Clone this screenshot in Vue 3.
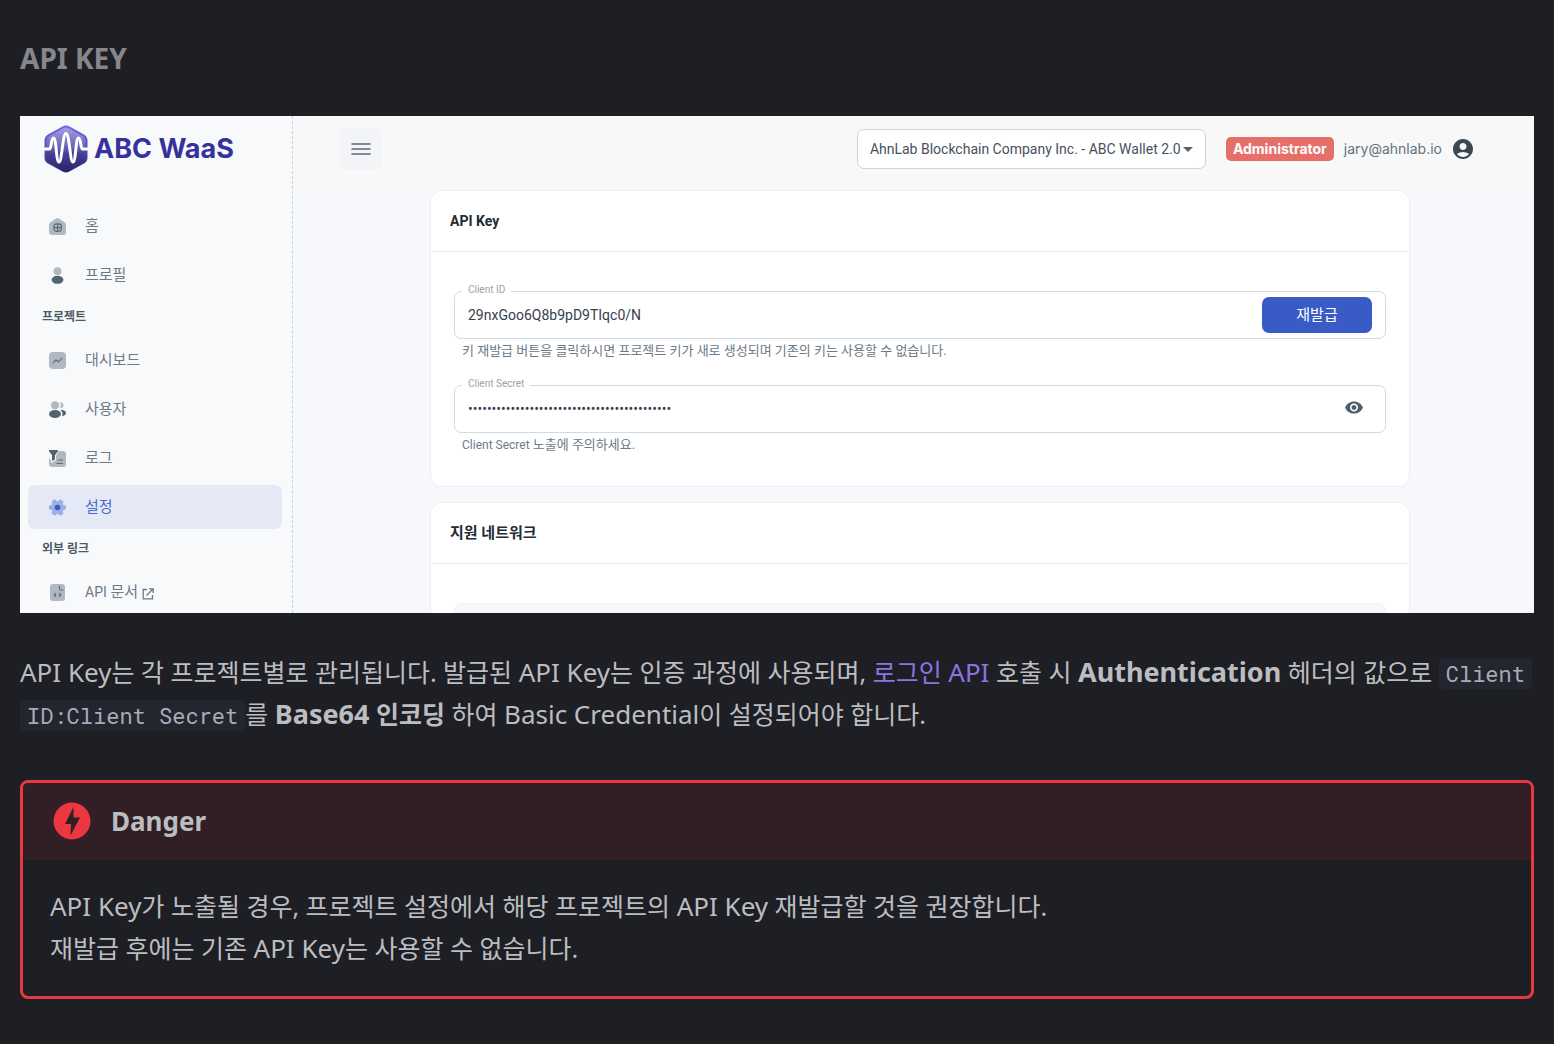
<script setup>
import { ref } from 'vue'

const topItems = [
  { icon: 'home', label: '홈' },
  { icon: 'profile', label: '프로필' },
]
const projectItems = [
  { icon: 'dashboard', label: '대시보드' },
  { icon: 'users', label: '사용자' },
  { icon: 'log', label: '로그' },
  { icon: 'settings', label: '설정', active: true },
]
const externalItems = [{ icon: 'docs', latin: 'API', label: ' 문서', external: true }]

const groups = [
  { title: '', items: topItems },
  { title: '프로젝트', items: projectItems },
  { title: '외부 링크', items: externalItems },
]

const clientId = ref('29nxGoo6Q8b9pD9TIqc0/N')
const clientSecret = ref('x'.repeat(43))
</script>

<template>
  <article class="doc">
    <h3 class="doc-title">API KEY</h3>

    <div class="console">
      <aside class="sidebar">
        <a class="brand" href="#">
          <svg class="brand-mark" viewBox="0 0 44 48" aria-hidden="true">
            <defs>
              <linearGradient id="mark" x1="0" y1="0" x2="0" y2="1">
                <stop offset="0" stop-color="#a9a0e0" />
                <stop offset="0.45" stop-color="#6d64b8" />
                <stop offset="0.6" stop-color="#46409b" />
                <stop offset="1" stop-color="#272466" />
              </linearGradient>
              <linearGradient id="rim" x1="0" y1="0" x2="0" y2="1">
                <stop offset="0" stop-color="#6b66ee" />
                <stop offset="0.5" stop-color="#5650b4" />
                <stop offset="1" stop-color="#2b2870" />
              </linearGradient>
            </defs>
            <path d="M19 2.300a6 6 0 0 1 6 0l14.500 8a6 6 0 0 1 3 5.200v17a6 6 0 0 1-3 5.200l-14.500 8a6 6 0 0 1-6 0l-14.500-8a6 6 0 0 1-3-5.200v-17a6 6 0 0 1 3-5.200z" fill="url(#mark)" stroke="url(#rim)" stroke-width="2" />
            <path d="M1 24h4.500c2 0 1.500-11 4-11 3 0 2.500 24 5.500 24S18.500 8.500 22 8.500 26 37 29 37s2.500-24 5.500-24c2.500 0 2 11 4 11H43" fill="none" stroke="#fff" stroke-width="3" stroke-linecap="round" stroke-linejoin="round" />
          </svg>
          <span>ABC WaaS</span>
        </a>

        <nav class="menu">
          <template v-for="group in groups" :key="group.title">
            <h4 v-if="group.title" class="menu-title">{{ group.title }}</h4>
            <a
              v-for="item in group.items"
              :key="item.label"
              href="#"
              class="menu-item"
              :class="{ active: item.active }"
            >
              <svg class="menu-icon" viewBox="0 0 17 17" aria-hidden="true">
                <g v-if="item.icon === 'home'">
                  <path class="soft" d="M7 .6a2.500 2.500 0 0 1 3 0l5.500 3.600A2.800 2.800 0 0 1 17 6.600V14a3 3 0 0 1-3 3H3a3 3 0 0 1-3-3V6.600a2.800 2.800 0 0 1 1.500-2.400z" />
                  <rect x="4.800" y="5.800" width="7.600" height="7.600" rx="2.800" fill="none" stroke="#5a6b78" stroke-width="1.200" />
                  <path d="M8.600 5.800v7.600M4.800 9.600h7.600" stroke="#5a6b78" stroke-width="1.200" />
                </g>
                <g v-else-if="item.icon === 'profile'">
                  <circle class="soft" cx="8.500" cy="4.200" r="3.900" />
                  <ellipse class="strong" cx="8.500" cy="12.800" rx="5.900" ry="4" />
                </g>
                <g v-else-if="item.icon === 'dashboard'">
                  <rect class="soft" width="17" height="17" rx="4" />
                  <path d="M4.200 10.800l2.700-2.900 2.600 1.900 3.500-3.600" fill="none" stroke="#5a6b78" stroke-width="1.200" stroke-linecap="round" stroke-linejoin="round" />
                </g>
                <g v-else-if="item.icon === 'users'">
                  <circle class="soft" cx="6" cy="4.200" r="4" />
                  <path class="soft" d="M11 1.300a3 3 0 1 1 0 5.900c1-1.900 1-4 0-5.900z" />
                  <ellipse class="strong" cx="6" cy="13" rx="6" ry="4" />
                  <path class="strong" d="M11.500 8.800c3.200 0 5.500 1.400 5.500 3.300 0 1.600-1.400 2.900-4 3.200 1.200-2.600.3-4.700-1.500-6.500z" />
                </g>
                <g v-else-if="item.icon === 'log'">
                  <path class="soft" d="M9.500 1H14a3 3 0 0 1 3 3v10a3 3 0 0 1-3 3H3a3 3 0 0 1-3-3V8.500l2 1.500v3l5-2.800V6z" />
                  <path class="strong" d="M.5 0h7.800c.7 0 .9.700.6 1.200L6 5.200v4.300L3 11V5.200L0 1.200C-.3.700 0 0 .5 0z" />
                  <path d="M9 10h5M7.500 13.500H14" stroke="#5a6b78" stroke-width="1.200" />
                </g>
                <g v-else-if="item.icon === 'settings'">
                  <g fill="#9dafe3">
                    <circle cx="8.500" cy="8.500" r="6.300" />
                    <rect x="6" y="0" width="5" height="17" rx="1.800" transform="rotate(30 8.500 8.500)" />
                    <rect x="6" y="0" width="5" height="17" rx="1.800" transform="rotate(90 8.500 8.500)" />
                    <rect x="6" y="0" width="5" height="17" rx="1.800" transform="rotate(150 8.500 8.500)" />
                  </g>
                  <circle cx="8.500" cy="8.500" r="2.800" fill="#3a5bc7" />
                </g>
                <g v-else>
                  <rect class="soft" x="1" width="15" height="17" rx="3" />
                  <path d="M10.500 2v2.500a1.500 1.500 0 0 0 1.500 1.500h2.500M7 9.300L5.200 11 7 12.700M10 9.300l1.800 1.700-1.800 1.700" fill="none" stroke="#5a6b78" stroke-width="1.200" />
                </g>
              </svg>
              <span><span v-if="item.latin" class="latin">{{ item.latin }}</span>{{ item.label }}</span>
              <svg v-if="item.external" class="external" viewBox="0 0 12 12" aria-hidden="true">
                <path d="M5 1.500H1.200v9.300h9.300V7M7 .800h4.200V5M11 1L4.500 7.500" fill="none" stroke="currentColor" stroke-width="1.300" />
              </svg>
            </a>
          </template>
        </nav>
      </aside>

      <main class="content">
        <header class="topbar">
          <button class="burger" type="button" aria-label="메뉴">
            <svg viewBox="0 0 20 14" width="20" height="14" aria-hidden="true">
              <path d="M1 2h18M1 7h18M1 12h18" stroke="#5a6875" stroke-width="1.500" stroke-linecap="round" />
            </svg>
          </button>
          <div class="project">
            <select aria-label="프로젝트 선택">
              <option>AhnLab Blockchain Company Inc. - ABC Wallet 2.0</option>
            </select>
            <svg class="caret" viewBox="0 0 10 5" width="10" height="5" aria-hidden="true">
              <path d="M0 0h10L5 5z" fill="#53636f" />
            </svg>
          </div>
          <span class="role">Administrator</span>
          <span class="account">jary@ahnlab.io</span>
          <svg class="avatar" viewBox="2 2 20 20" aria-hidden="true">
            <path fill="#3c4653" d="M12 2C6.480 2 2 6.480 2 12s4.480 10 10 10 10-4.480 10-10S17.520 2 12 2zm0 4c1.930 0 3.500 1.570 3.500 3.500S13.930 13 12 13s-3.500-1.570-3.500-3.500S10.070 6 12 6zm0 14c-2.030 0-4.430-.820-6.140-2.880a9.950 9.950 0 0 1 12.280 0C16.430 19.180 14.030 20 12 20z" />
          </svg>
        </header>

        <div class="cards">
          <section class="card">
            <h2 class="card-title"><span class="latin">API Key</span></h2>
            <div class="card-body">
              <div class="field">
                <div class="field-box">
                  <label for="client-id">Client ID</label>
                  <input id="client-id" v-model="clientId" type="text" readonly />
                  <button class="reissue" type="button">재발급</button>
                </div>
                <p class="hint">키 재발급 버튼을 클릭하시면 프로젝트 키가 새로 생성되며 기존의 키는 사용할 수 없습니다.</p>
              </div>
              <div class="field">
                <div class="field-box">
                  <label for="client-secret">Client Secret</label>
                  <input id="client-secret" v-model="clientSecret" type="password" readonly />
                  <button class="reveal" type="button" aria-label="Client Secret 보기">
                    <svg viewBox="1 4 22 16" width="18" height="13" aria-hidden="true">
                      <path fill="#4e5f6b" d="M12 4.500C7 4.500 2.730 7.610 1 12c1.730 4.390 6 7.500 11 7.500s9.270-3.110 11-7.500c-1.730-4.390-6-7.500-11-7.500zM12 17c-2.760 0-5-2.240-5-5s2.240-5 5-5 5 2.240 5 5-2.240 5-5 5zm0-8c-1.660 0-3 1.340-3 3s1.340 3 3 3 3-1.340 3-3-1.340-3-3-3z" />
                    </svg>
                  </button>
                </div>
                <p class="hint"><span class="latin">Client Secret</span> 노출에 주의하세요.</p>
              </div>
            </div>
          </section>

          <section class="card">
            <h2 class="card-title">지원 네트워크</h2>
            <div class="card-body">
              <div class="network-list"></div>
            </div>
          </section>
        </div>
      </main>
    </div>

    <p class="prose">
      <span class="latin">API Key</span>는 각 프로젝트별로 관리됩니다. 발급된 <span class="latin">API Key</span>는 인증 과정에 사용되며,
      <a href="#">로그인 <span class="latin">API</span></a> 호출 시
      <strong><span class="latin">Authentication</span></strong> 헤더의 값으로 <code>Client ID:Client Secret</code>를
      <strong><span class="latin">Base64</span> 인코딩</strong> 하여 <span class="latin">Basic Credential</span>이 설정되어야 합니다.
    </p>

    <div class="danger">
      <p class="danger-title">
        <svg viewBox="0 0 38 38" width="38" height="38" aria-hidden="true">
          <circle cx="19" cy="19" r="18.500" fill="#eb3740" />
          <path d="M20.500 5L12 22h6l-.5 11.500L27 15.500h-6.500z" fill="#311f25" />
        </svg>
        <span class="latin">Danger</span>
      </p>
      <p class="danger-body">
        <span class="latin">API Key</span>가 노출될 경우, 프로젝트 설정에서 해당 프로젝트의 <span class="latin">API Key</span> 재발급할 것을 권장합니다.<br />
        재발급 후에는 기존 <span class="latin">API Key</span>는 사용할 수 없습니다.
      </p>
    </div>
  </article>
</template>

<style>
body {
  margin: 0;
  background: #1e1f24;
}
</style>

<style scoped>
* {
  box-sizing: border-box;
}

.doc {
  padding: 37px 20px 44px;
  color: #bcbdc1;
  font-family: "Noto Sans", "Noto Sans CJK KR", sans-serif;
  font-size: 25px;
  line-height: 42px;
}

/* Latin and Hangul glyphs are sized separately so they look even side by side */
.latin {
  font-size: 26px;
  line-height: 1;
}

.doc-title {
  margin: 0 0 37px;
  color: #86878c;
  font-size: 28px;
  font-weight: 700;
  line-height: 42px;
}

/* console preview */
.console {
  display: flex;
  height: 497px;
  overflow: hidden;
  background: #f7f8fb;
  color: #637381;
  font-family: Roboto, "Noto Sans CJK KR", sans-serif;
  font-size: 14px;
  line-height: 20px;
}

.sidebar {
  flex: 0 0 273px;
  border-right: 1px dashed #c9d3db;
  background: #f8f9fb;
}

.brand {
  display: flex;
  align-items: center;
  gap: 6px;
  height: 66px;
  padding-left: 24px;
  color: #37329b;
  font-family: Inter, sans-serif;
  font-size: 27px;
  font-weight: 700;
  text-decoration: none;
}

.brand-mark {
  width: 44px;
  height: 48px;
}

.menu {
  display: flex;
  flex-direction: column;
  gap: 5px;
  padding: 22px 10px 0 8px;
}

.menu-title {
  height: 31px;
  margin: 0;
  padding: 5px 0 0 14px;
  color: #4b5a67;
  font-size: 12px;
  font-weight: 700;
  line-height: 20px;
}

.menu-item {
  display: flex;
  flex: none;
  align-items: center;
  height: 44px;
  padding-left: 21px;
  border-radius: 7px;
  color: #6c7a87;
  font-size: 15px;
  text-decoration: none;
}

.menu-item .latin,
.card-title .latin {
  font-size: 14px;
}

.menu-item.active {
  background: #e5e9f5;
  color: #4a6ad0;
}

.menu-icon {
  width: 17px;
  height: 17px;
  margin-right: 19px;
}

.soft {
  fill: #b0b9c1;
}

.strong {
  fill: #53646f;
}

.external {
  width: 12px;
  height: 12px;
  margin: 3px 0 0 4px;
}

.content {
  flex: 1;
  min-width: 0;
}

.topbar {
  display: flex;
  align-items: center;
  height: 74px;
  padding: 0 61px 8px 47px;
  background: #f8f8f8;
}

.burger {
  display: grid;
  place-items: center;
  width: 42px;
  height: 42px;
  margin-right: auto;
  padding: 0;
  border: 0;
  border-radius: 8px;
  background: #f2f4f8;
}

.project {
  position: relative;
  width: 349px;
  margin-right: 20px;
}

.project select {
  display: block;
  width: 100%;
  height: 40px;
  padding: 0 12px;
  border: 1px solid #ccd4db;
  border-radius: 7px;
  appearance: none;
  background: #fff;
  color: #46525e;
  font: inherit;
}

.caret {
  position: absolute;
  top: 18px;
  right: 13px;
  pointer-events: none;
}

.role {
  height: 24px;
  margin-right: 10px;
  padding: 0 7px;
  border-radius: 5px;
  background: #e66f69;
  color: #fff;
  font-family: Inter, sans-serif;
  font-weight: 700;
  line-height: 24px;
}

.account {
  margin-right: 11px;
  font-family: Inter, sans-serif;
}

.avatar {
  width: 20px;
  height: 20px;
}

.cards {
  display: flex;
  flex-direction: column;
  gap: 15px;
  padding: 0 124px 0 137px;
}

.card {
  border: 1px solid #eceff2;
  border-radius: 12px;
  background: #fff;
}

.card-title {
  margin: 0;
  padding: 20px 19px;
  border-bottom: 1px solid #eceff2;
  color: #212b36;
  font-size: 15px;
  font-weight: 700;
  line-height: 20px;
}

.card-body {
  padding: 39px 23px 31px;
}

.field + .field {
  margin-top: 24px;
}

.field-box {
  position: relative;
  display: flex;
  align-items: center;
  height: 48px;
  padding: 0 13px;
  border: 1px solid #d2d9df;
  border-radius: 7px;
}

.field-box label {
  position: absolute;
  top: -10px;
  left: 7px;
  padding: 0 6px;
  background: #fff;
  color: #9aa3ab;
  font-size: 10px;
  line-height: 16px;
}

.field-box input {
  flex: 1;
  min-width: 0;
  padding: 0;
  border: 0;
  outline: 0;
  background: none;
  color: #36414c;
  font: inherit;
}

.reissue {
  width: 110px;
  height: 36px;
  padding: 0 0 4px;
  border: 0;
  border-radius: 7px;
  background: #385bc5;
  color: #fff;
  font-family: inherit;
  font-size: 15px;
}

.reveal {
  display: grid;
  place-items: center;
  width: 36px;
  height: 36px;
  padding: 0 0 3px;
  border: 0;
  background: none;
}

.hint {
  margin: 1px 0 0 8px;
  color: #6c7a87;
  font-size: 13px;
  line-height: 21px;
}

.hint .latin {
  font-size: 12px;
}

.network-list {
  height: 120px;
  border: 1px solid #eef0f2;
  border-radius: 8px;
  background: #f7f8fa;
}

/* article text */
.prose {
  margin: 38px 0 45px;
}

.prose a {
  color: #8f73e0;
  text-decoration: none;
}

.prose strong .latin {
  font-size: 27px;
}

.prose code {
  padding: 1px 7px;
  border-radius: 4px;
  background: #23252f;
  color: #a9abb8;
  font-family: "Roboto Mono", "Liberation Mono", monospace;
  font-size: 22px;
  line-height: 1;
  -webkit-box-decoration-break: clone;
  box-decoration-break: clone;
}

.danger {
  overflow: hidden;
  border: 3px solid #eb3740;
  border-radius: 8px;
}

.danger-title {
  display: flex;
  align-items: center;
  gap: 20px;
  height: 77px;
  margin: 0;
  padding: 0 30px 2px;
  background: #311f25;
  font-weight: 700;
}

.danger-body {
  margin: 0;
  padding: 25px 27px 27px;
}
</style>
